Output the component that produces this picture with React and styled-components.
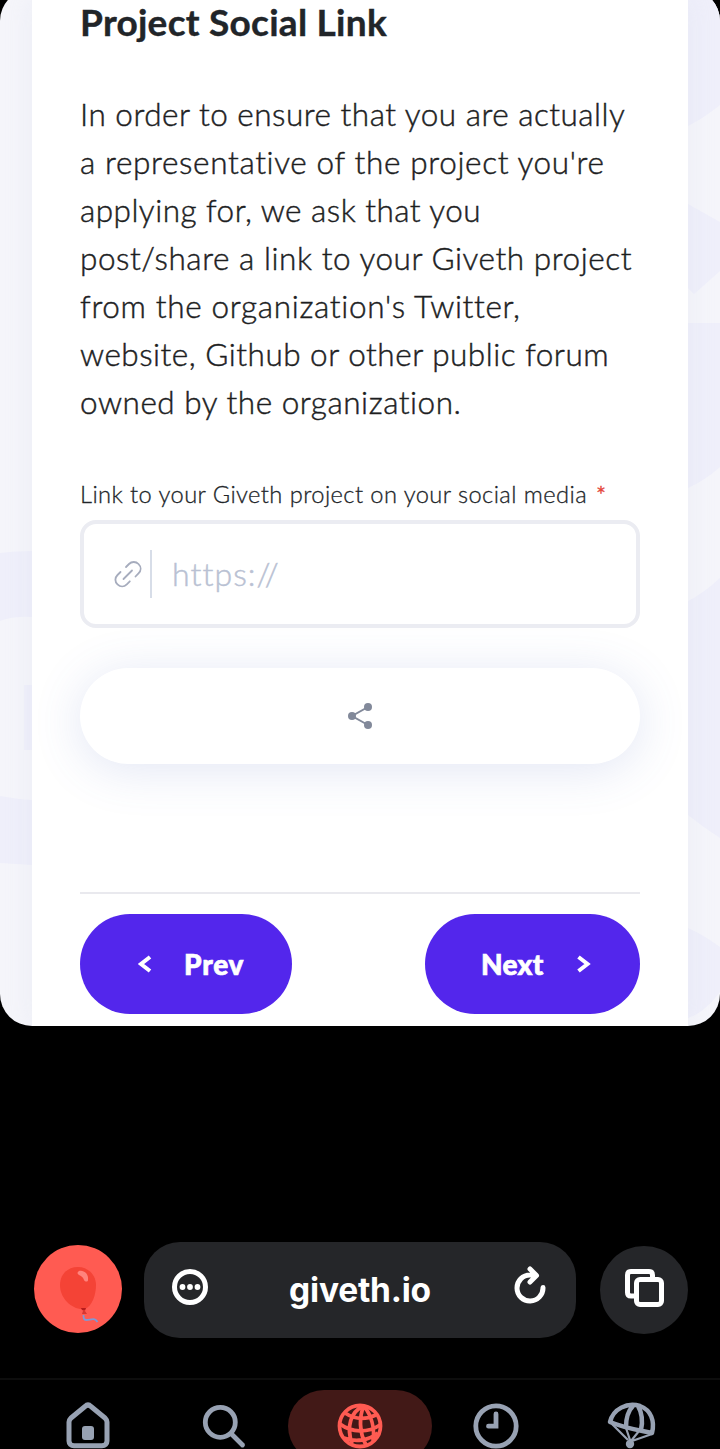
import React from "react";
import styled, { createGlobalStyle } from "styled-components";

const Global = createGlobalStyle`
  * { box-sizing: border-box; }
  body { margin: 0; background: #000; }
  button, input { font: inherit; border: 0; padding: 0; background: none; }
  svg { overflow: visible; flex: none; }
`;
const Screen = styled.div`
  width: 720px; height: 1449px; overflow: hidden; background: #000;
  display: flex; flex-direction: column;
  font-family: Lato, "Liberation Sans", sans-serif;
`;
const Page = styled.main`
  position: relative; height: 1037px; margin-top: -11px; flex: none; overflow: hidden;
  border-radius: 32px; background: #f5f5fa; padding: 11px 32px 0;
`;
const Pattern = styled.svg`position: absolute; inset: 11px 0 0;`;
const Card = styled.section`
  position: relative; height: 100%; background: #fff; padding: 0 48px;
  display: flex; flex-direction: column;
  box-shadow: 0 0 24px rgba(212, 218, 238, 0.28);
`;
const Title = styled.h1`
  margin: 0; height: 90px; padding-top: 2px; color: #212529; white-space: nowrap;
  font-size: 37px; line-height: 40px; font-weight: 700; -webkit-text-stroke: 0.4px #212529;
`;
const Copy = styled.p`
  margin: 0; color: #1d1e1f; font-size: 31.5px; line-height: 48px; font-weight: 300;
  -webkit-text-stroke: 0.45px currentColor;
`;
const Line = styled.span`
  display: block; width: max-content; white-space: nowrap;
  letter-spacing: ${(p) => p.$track || 0}px;
`;
const Label = styled.label`
  display: flex; gap: 9px; margin-top: 51px; height: 43px; white-space: nowrap;
  color: #212529; font-size: 23.7px; line-height: 34px; font-weight: 300;
  -webkit-text-stroke: 0.3px currentColor;
`;
const Required = styled.span`color: #e5483c; font-weight: 400;`;
const Field = styled.div`
  height: 108px; flex: none; border: 4px solid #ebecf2; border-radius: 16px;
  display: flex; align-items: center; padding-left: 30px;
`;
const Divider = styled.i`width: 2px; height: 48px; background: #d7dde8; margin: 0 20px 0 8px;`;
const Placeholder = styled.span`
  color: #b9c1d3; font-size: 32px; line-height: 48px; font-weight: 300;
  -webkit-text-stroke: 0.45px currentColor;
`;
const Share = styled.button`
  height: 96px; flex: none; margin-top: 40px; border-radius: 48px; background: #fff;
  display: flex; align-items: center; justify-content: center;
  box-shadow: 0 6px 48px rgba(83, 104, 190, 0.17);
`;
const Actions = styled.footer`
  margin-top: 128px; border-top: 2px solid #e9e9ee; padding-top: 20px;
  display: flex; justify-content: space-between;
`;
const Action = styled.button`
  width: ${(p) => p.$width}px; height: 100px; border-radius: 50px; background: #5326ec;
  color: #fff; font-size: 28px; line-height: 40px; font-weight: 900;
  -webkit-text-stroke: 0.7px #fff;
  display: flex; align-items: center; gap: 32px; padding-left: 56px;
`;
const Browser = styled.div`
  margin-top: 216px; height: 96px; flex: none; padding: 0 32px 0 34px;
  display: flex; align-items: center;
`;
const Round = styled.button`
  width: 88px; height: 88px; border-radius: 50%; flex: none;
  background: ${(p) => p.$color}; display: grid; place-items: center;
  margin-top: ${(p) => p.$drop || 0}px;
`;
const Address = styled.div`
  width: 432px; height: 96px; margin: 0 24px 0 22px; border-radius: 36px; background: #252629;
  display: flex; align-items: center; justify-content: space-between; padding: 0 26px;
`;
const Domain = styled.span`
  color: #fff; font-family: "Inter", sans-serif; font-size: 33.5px; line-height: 44px; font-weight: 650;
`;
const Nav = styled.nav`
  margin-top: 40px; height: 71px; flex: none; border-top: 2px solid #0d0d0d;
  padding: 10px 20px 0; display: grid; grid-template-columns: repeat(5, 136px);
  justify-items: center; overflow: hidden;
`;
const Tab = styled.button`
  width: 144px; height: 72px; border-radius: 36px; margin: 0 -4px;
  background: ${(p) => (p.$active ? "#421917" : "transparent")};
  display: flex; align-items: center; justify-content: center;
`;

const lines = [
  ["In order to ensure that you are actually", 0.5],
  ["a representative of the project you're", 0.65],
  ["applying for, we ask that you", 0.48],
  ["post/share a link to your Giveth project", 0.56],
  ["from the organization's Twitter,", 0.67],
  ["website, Github or other public forum", 0.51],
  ["owned by the organization.", 0.53],
];

export default function App() {
  return (
    <Screen>
      <Global />
      <Page>
        <Pattern width="720" height="1026" fill="#efeffa">
          <path d="M0 553Q16 551 32 551V617Q14 616 0 621ZM24 685H32V750H24ZM0 796Q16 799 32 800V865L0 863Z" />
          <path d="M688 0H720V105Q704 118 688 126ZM688 204L720 222V271L694 294L688 288ZM688 323H720V467Q704 481 688 488ZM720 578V838Q704 828 688 815V601Q704 593 720 578ZM688 928Q704 935 720 947V992Q704 1013 688 1018Z" />
        </Pattern>
        <Card>
          <Title><Line $track={0.27}>Project Social Link</Line></Title>
          <Copy>{lines.map(([t, s]) => <Line key={t} $track={s}>{t}</Line>)}</Copy>
          <Label><Line $track={0.42}>Link to your Giveth project on your social media</Line><Required>*</Required></Label>
          <Field>
            <svg width="28" height="28" viewBox="0 -1 28 28" fill="none" stroke="#a6acbd" strokeWidth="1.8" strokeLinecap="round">
              <path d="M12 6l3-3a6.600 6.600 0 0 1 9.500 0c2.800 2.800 2.800 6.500 0 9.300L21.500 15.500M6.500 11l-3 3c-2.800 2.800-2.800 6.500 0 9.300s6.500 2.800 9.300 0l3-3M9.500 18L18 9.500" />
            </svg>
            <Divider /><Placeholder><Line $track={1.05}>https://</Line></Placeholder>
          </Field>
          <Share aria-label="Share">
            <svg width="26" height="28" viewBox="0 0 26 28" fill="#82899a" stroke="#82899a" strokeWidth="2">
              <path d="M21 5L5 14l16 9" fill="none" /><g stroke="none"><circle cx="21" cy="5" r="4" /><circle cx="5" cy="14" r="4" /><circle cx="21" cy="23" r="4" /></g>
            </svg>
          </Share>
          <Actions>
            <Action $width={212}>
              <svg width="16" height="18" viewBox="0 0 16 18" fill="none" stroke="#fff" strokeWidth="4"><path d="M14 2L5 9l9 7" /></svg>
              <Line $track={0.8}>Prev</Line>
            </Action>
            <Action $width={215}>
              <Line $track={0.3}>Next</Line>
              <svg width="16" height="18" viewBox="0 0 16 18" fill="none" stroke="#fff" strokeWidth="4"><path d="M2.500 2L11.500 9l-9 7" /></svg>
            </Action>
          </Actions>
        </Card>
      </Page>
      <Browser>
        <Round $color="#ff5b52" $drop={-2} aria-label="Profile">
          <svg width="88" height="88" viewBox="0 0 88 88">
            <path d="M44 22C33 22 26 30 26 40c0 12 9 22 20 24h5c7-3 11-14 11-24 0-10-8-18-18-18Z" fill="#f44336" />
            <path d="M45 26c5-1 10 3 9 9 0 2-3 2-4 0-1-3-3-4-5-5-2-1-2-3 0-4Z" fill="#ff837d" />
            <path d="M47 63h5l-1 3 2 3h-5l1-3Z" fill="#d93630" /><path d="M47 63h5l-1 2h-3Z" fill="#b71c1c" /><path d="M49.500 70c0 3 0 5 3 5 4 0 8-3 11 2" fill="none" stroke="#8298d5" strokeWidth="1.800" />
          </svg>
        </Round>
        <Address>
          <svg width="40" height="40" viewBox="0 0 40 40" fill="#fff">
            <circle cx="20" cy="17" r="15.500" fill="none" stroke="#fff" strokeWidth="5" /><circle cx="12.500" cy="17" r="2.900" /><circle cx="20" cy="17" r="2.900" /><circle cx="27.500" cy="17" r="2.900" />
          </svg>
          <Domain><Line $track={-0.2}>giveth.io</Line></Domain>
          <svg width="40" height="44" viewBox="0 0 40 44" fill="none" stroke="#fff" strokeWidth="5" strokeLinecap="round" strokeLinejoin="round"><path d="M33 19.500A13 13 0 1 1 20 7H26M20 1l6.500 6.500L20 14" /></svg>
        </Address>
        <Round $color="#252629" aria-label="Tabs">
          <svg width="88" height="88" viewBox="0 0 88 88" fill="none" stroke="#fff" strokeWidth="5" strokeLinejoin="round"><rect x="36.500" y="33.500" width="25" height="25" rx="3.500" /><path d="M36 50h-5c-2.500 0-3.500-1-3.500-3.500V29c0-2.500 1-3.500 3.500-3.500h18c2.500 0 3.500 1 3.500 3.500v4" /></svg>
        </Round>
      </Browser>
      <Nav>
        <Tab aria-label="Home"><svg width="48" height="48" viewBox="0 0 48 48" fill="none" stroke="#98a2b3" strokeWidth="5" strokeLinejoin="round"><path d="M5 20c0-2 1-3 2-4L21 4.500c2-2 4-2 6 0l14 11.500c1 1 2 2 2 4v19c0 3-2 4.800-5 4.800H10c-3 0-5-1.800-5-4.800Z" /><rect x="18" y="24" width="12" height="14" rx="3" fill="#98a2b3" stroke="none" /></svg></Tab>
        <Tab aria-label="Search"><svg width="48" height="48" viewBox="0 0 48 48" fill="none" stroke="#98a2b3" strokeWidth="4.8" strokeLinecap="round"><circle cx="20.300" cy="20.300" r="15" /><path d="M31.500 32L42.500 43" /></svg></Tab>
        <Tab $active aria-label="Browser"><svg width="48" height="48" viewBox="0 0 48 48" fill="none" stroke="#ff5b52" strokeWidth="3.800"><circle cx="24" cy="24" r="20.500" /><path d="M27 4C15 10 10 24 16 42M28 4C23 14 23 30 30 43M28 4C35 13 39 26 37 39M9 11c9 6 20 7 31 2M4 22c12 9 28 9 40 1M8 36c11 4 24 3 34-5" /></svg></Tab>
        <Tab aria-label="History"><svg width="48" height="48" viewBox="0 0 48 48" fill="none" stroke="#98a2b3" strokeWidth="4.8" strokeLinecap="round"><circle cx="24" cy="24" r="20.200" /><path d="M24 12v12.200h-7.500" /></svg></Tab>
        <Tab aria-label="Discover"><svg width="52" height="52" viewBox="0 0 52 52" fill="none" stroke="#98a2b3" strokeWidth="4.5" strokeLinejoin="round"><path d="M4 22C7 9 21 2 34 6c11 4 15 15 12 27C32 30 18 28 4 22ZM20 27C20 19 22 11 27 6M35 30c2-9 1-17-3-24" /><path d="M6 24l16 16M20 28l4 12M33 31L25 41M46 34L26 41" strokeWidth="2.2" /><circle cx="24" cy="44" r="4.200" fill="#98a2b3" stroke="none" /></svg></Tab>
      </Nav>
    </Screen>
  );
}
